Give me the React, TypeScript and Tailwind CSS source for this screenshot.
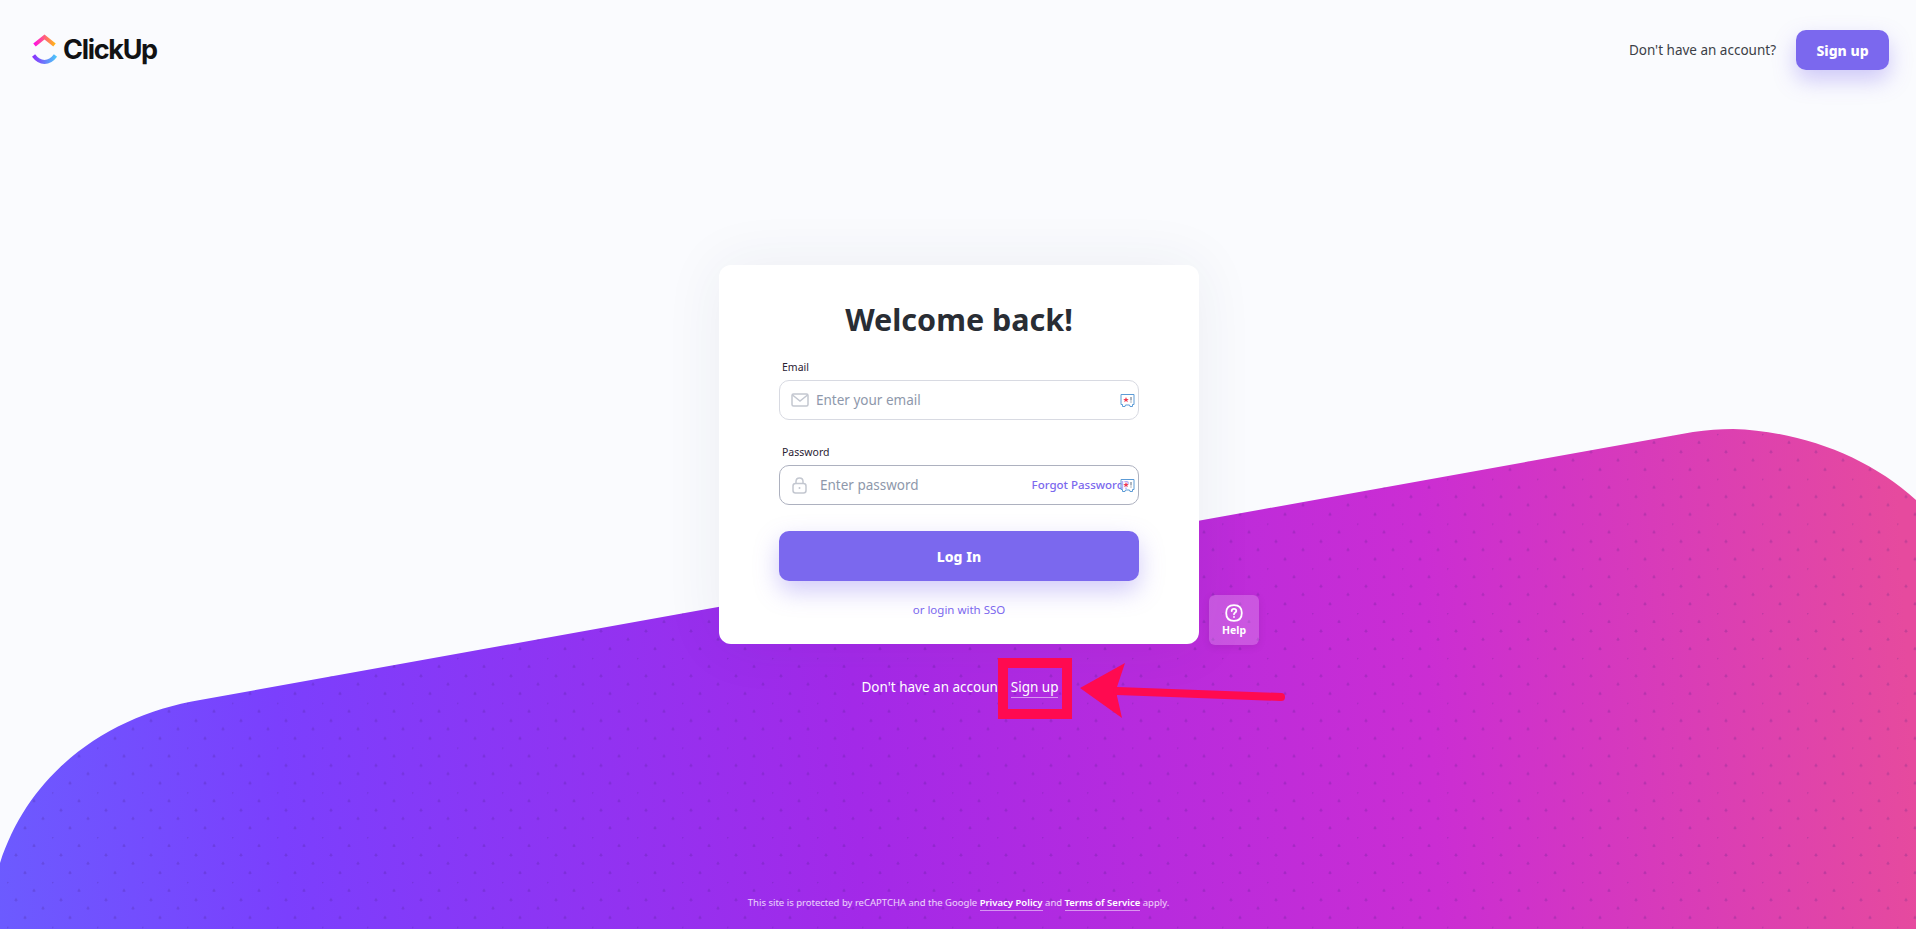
const font = { fontFamily: '"Noto Sans", "Open Sans", sans-serif' };

const wavePath =
  "M0 863 C30 770 110 715 200 700 L1693 432 C1707 430 1720 429 1733 429 C1800 431 1868 456 1916 500 L1916 929 L0 929 Z";

function Logo() {
  return (
    <svg width="26" height="32" viewBox="0 0 26 32" fill="none">
      <defs>
        <linearGradient id="logoTop" gradientUnits="userSpaceOnUse" x1="1" y1="0" x2="25" y2="0">
          <stop offset="0" stopColor="#ff02f0" />
          <stop offset="1" stopColor="#ffc800" />
        </linearGradient>
        <linearGradient id="logoBottom" gradientUnits="userSpaceOnUse" x1="1" y1="0" x2="25" y2="0">
          <stop offset="0" stopColor="#8930fd" />
          <stop offset="1" stopColor="#49ccf9" />
        </linearGradient>
      </defs>
      <path d="M2.5 11 L12.5 3 L22.5 11" stroke="url(#logoTop)" strokeWidth="4" strokeLinejoin="miter" />
      <path d="M1.5 21.5 C4.5 25.5 8 28 12.5 28 C17 28 20.5 25.5 23.5 21.5" stroke="url(#logoBottom)" strokeWidth="4" />
    </svg>
  );
}

function Background() {
  const dots = [
    [0, 0],
    [27, 8.3],
    [9, 17.7],
    [36, 26],
    [18, 35.4],
  ];
  return (
    <svg className="absolute inset-0" width="1916" height="929" viewBox="0 0 1916 929">
      <defs>
        <linearGradient id="bg" gradientUnits="userSpaceOnUse" x1="0" y1="929" x2="1916" y2="830">
          <stop offset="0" stopColor="#6c5bff" />
          <stop offset="0.15" stopColor="#7b3ffd" />
          <stop offset="0.45" stopColor="#a329e8" />
          <stop offset="0.75" stopColor="#cb2dd3" />
          <stop offset="1" stopColor="#e64a9e" />
        </linearGradient>
        <pattern id="dots" patternUnits="userSpaceOnUse" width="45" height="44.8" patternTransform="translate(7 30.7)">
          {dots.map(([x, y]) => (
            <path
              key={x}
              d={`M${x - 1.8} ${y + 0.8} L${x} ${y - 1.8} L${x + 1.8} ${y + 0.8} L${x + 0.6} ${y + 1.6} L${x - 0.6} ${y + 1.6} Z`}
              fill="#3c1a78"
              opacity="0.2"
            />
          ))}
        </pattern>
      </defs>
      <path d={wavePath} fill="url(#bg)" />
      <path d={wavePath} fill="url(#dots)" />
    </svg>
  );
}

function ExtIcon() {
  return (
    <svg className="absolute right-[3px] top-[12px]" width="15" height="15" viewBox="0 0 15 15" fill="none">
      <path d="M1 1.5 H14 V11.5 H12.5 V13.5 H10 L9.5 12 H5.5 L5 13.5 H2.5 V11.5 H1 Z" stroke="#5c9bd6" strokeWidth="1" fill="#fff" fillOpacity="0.4" />
      <path d="M6 4 L6.8 6 L8.8 6 L7.2 7.3 L7.8 9.3 L6 8.1 L4.2 9.3 L4.8 7.3 L3.2 6 L5.2 6 Z" fill="#f0384f" />
      <path d="M11 4 V7.5 M11 8.5 V9.5" stroke="#5b6b80" strokeWidth="1" />
    </svg>
  );
}

export default function App() {
  return (
    <div className="relative flex h-screen w-full flex-col overflow-hidden bg-[#fafbfe]" style={font}>
      <Background />

      <header className="relative flex items-center justify-between pl-[32px] pr-[27px] pt-[30px]">
        <div className="flex items-center gap-[5px]">
          <Logo />
          <span className="text-[27px] font-bold leading-[40px] tracking-[-1.3px] text-[#111214]" style={{ fontFamily: "Inter, sans-serif" }}>
            ClickUp
          </span>
        </div>
        <div className="flex items-center gap-[20px]">
          <span className="text-[13.5px] text-[#3c3f47]">Don't have an account?</span>
          <button className="h-[40px] w-[93px] rounded-[10px] bg-[#7b68ee] text-[14px] font-extrabold text-white shadow-[0_10px_22px_rgba(123,104,238,0.35)]">
            Sign up
          </button>
        </div>
      </header>

      <main className="relative mt-[195px] flex flex-col items-center">
        <div className="relative ml-[2px] h-[379px] w-[480px] rounded-[12px] bg-white px-[60px] pt-[32px] shadow-[0_0_60px_rgba(40,50,90,0.07)]">
          <h1 className="text-center text-[30.5px] font-bold leading-[44px] text-[#292d34]">Welcome back!</h1>

          <label className="mt-[18px] block pl-[3px] text-[10.5px] leading-[16px] text-[#2a2233]">Email</label>
          <div className="relative mt-[5px] flex h-[40px] items-center rounded-[10px] border border-[#d8dae2] bg-white pl-[11px]">
            <svg width="18" height="14" viewBox="0 0 18 14" fill="none" stroke="#c3c7d0" strokeWidth="1.5">
              <rect x="1" y="1" width="16" height="12" rx="1.5" />
              <path d="M1.5 2 L9 8 L16.5 2" />
            </svg>
            <span className="ml-[7px] text-[13.5px] text-[#8e98ab]">Enter your email</span>
            <ExtIcon />
          </div>

          <label className="mt-[24px] block pl-[3px] text-[10.5px] leading-[16px] text-[#2a2233]">Password</label>
          <div className="relative mt-[5px] flex h-[40px] items-center rounded-[10px] border border-[#adb1bf] bg-white pl-[12px]">
            <svg width="15" height="17" viewBox="0 0 15 17" fill="none" stroke="#c3c7d0" strokeWidth="1.5">
              <rect x="1" y="6.5" width="13" height="9.5" rx="2.5" />
              <path d="M4 6.5 V4.5 C4 2.5 5.5 1 7.5 1 C9.5 1 11 2.5 11 4.5 V6.5" />
              <circle cx="7.5" cy="11" r="1" fill="#c3c7d0" stroke="none" />
            </svg>
            <span className="ml-[13px] text-[13.5px] text-[#8e98ab]">Enter password</span>
            <a className="absolute right-[9px] text-[11.5px] font-medium text-[#7b68ee]">Forgot Password?</a>
            <ExtIcon />
          </div>

          <button className="mt-[26px] h-[50px] w-full rounded-[10px] bg-[#7b68ee] text-[14px] font-extrabold text-white shadow-[0_10px_25px_rgba(123,104,238,0.35)]">
            Log In
          </button>

          <a className="mt-[21px] block text-center text-[11.5px] leading-[16px] text-[#7b68ee]">or login with SSO</a>

          <div className="absolute left-[490px] top-[330px] flex h-[50px] w-[50px] flex-col items-center justify-center rounded-[6px] bg-white/20 shadow-[0_2px_8px_rgba(0,0,0,0.08)]">
            <svg width="18" height="18" viewBox="0 0 18 18" fill="none" stroke="#fff" strokeWidth="1.8" strokeLinecap="round">
              <path d="M9 1.2 C14.5 1.2 16.8 3.5 16.8 9 C16.8 14.5 14.5 16.8 9 16.8 C3.5 16.8 1.2 14.5 1.2 9 C1.2 3.5 3.5 1.2 9 1.2 Z" />
              <path d="M6.7 7 C6.7 5.6 7.7 4.9 9 4.9 C10.3 4.9 11.3 5.7 11.3 6.9 C11.3 8.4 9 8.6 9 10.3" />
              <path d="M9 13 L9 13.1" />
            </svg>
            <span className="mt-[1px] text-[10.5px] font-bold leading-[14px] text-white">Help</span>
          </div>
        </div>

        <div className="mt-[33px] flex text-[13.5px] leading-[20px] text-white">
          <span className="ml-[4px]">Don't have an account</span>
          <a className="ml-[8px] border-b border-white/50">Sign up</a>
        </div>
      </main>

      {/* annotation drawn on top of the shot */}
      <div className="absolute left-[998px] top-[658px] h-[61px] w-[74px] border-[10px] border-[#ff0a50]" />
      <svg className="absolute left-[1076px] top-[658px]" width="216" height="64" viewBox="0 0 216 64" fill="none">
        <path d="M4 30 L49 5 L41 29 L41 38 L46 60 Z" fill="#ff0a50" />
        <path d="M205 39 L41 33" stroke="#ff0a50" strokeWidth="8" strokeLinecap="round" />
      </svg>

      <footer className="absolute bottom-[18px] left-0 flex w-full justify-center pl-[1px] text-[9.5px] leading-[14px] text-white/80">
        <span>This site is protected by reCAPTCHA and the Google&nbsp;</span>
        <a className="border-b border-white/50 font-semibold text-white">Privacy Policy</a>
        <span>&nbsp;and&nbsp;</span>
        <a className="border-b border-white/50 font-semibold text-white">Terms of Service</a>
        <span>&nbsp;apply.</span>
      </footer>
    </div>
  );
}
